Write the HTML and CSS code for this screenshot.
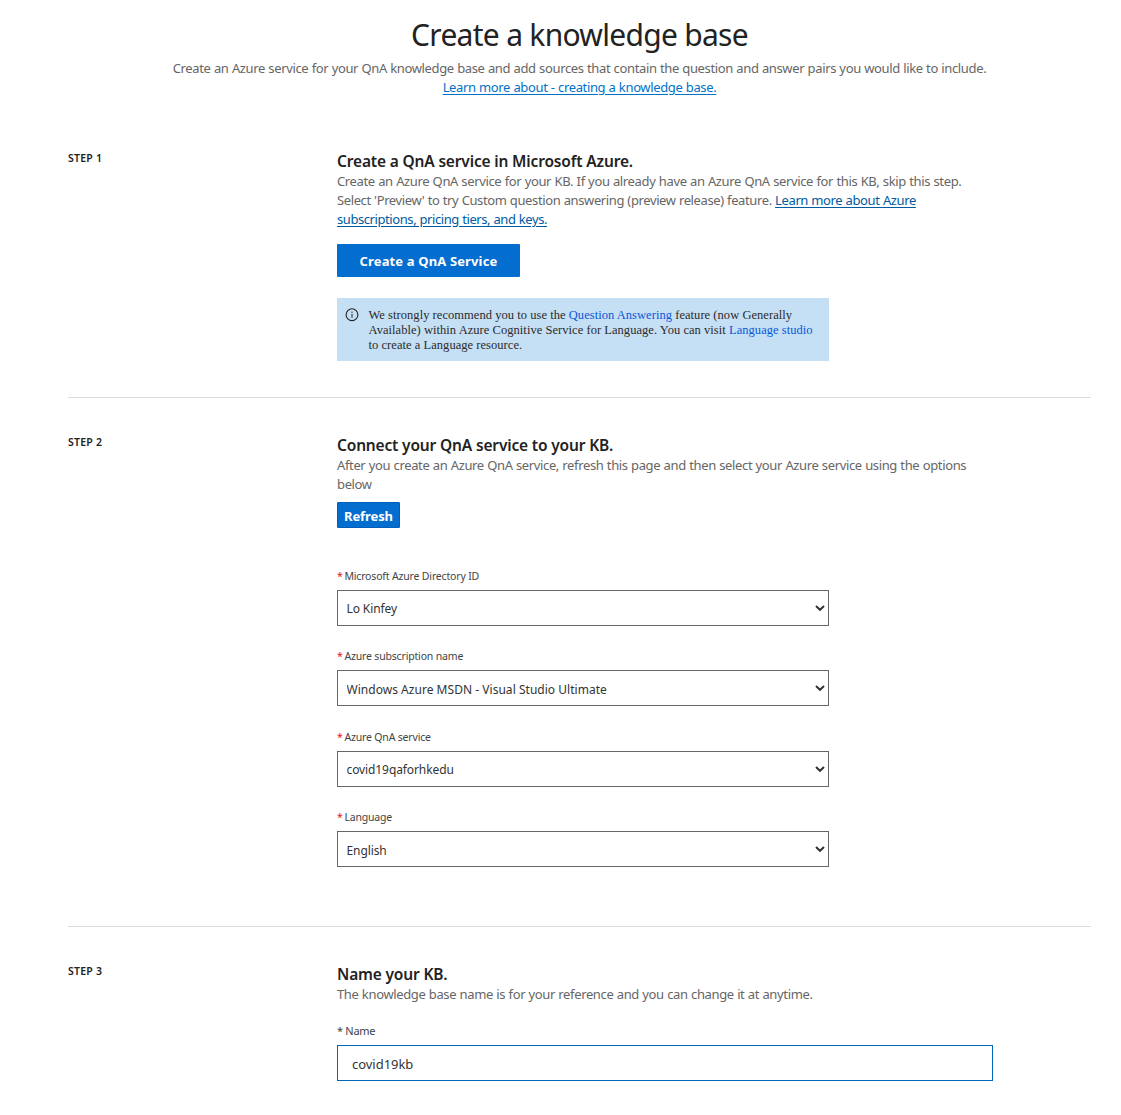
FILE: index.html
```
<!DOCTYPE html>
<html lang="en">
<head>
<meta charset="utf-8">
<title>Create a knowledge base</title>
<link rel="stylesheet" href="styles.css">
</head>
<body>
<header class="page-header">
  <h1>Create a knowledge base</h1>
  <p>Create an Azure service for your QnA knowledge base and add sources that contain the question and answer pairs you would like to include.<br>
  <a class="header-link" href="#">Learn more about - creating a knowledge base.</a></p>
</header>
<main>
  <section class="step step-one">
    <div class="step-label">STEP 1</div>
    <div class="step-body">
      <h2>Create a QnA service in Microsoft Azure.</h2>
      <p>Create an Azure QnA service for your KB. If you already have an Azure QnA service for this KB, skip this step.<br><span class="snug">Select 'Preview' to try Custom question answering (preview release) feature. <a href="#">Learn more about Azure</a></span><br><a class="tight" href="#">subscriptions, pricing tiers, and keys.</a></p>
      <button class="create" type="button">Create a QnA Service</button>
      <div class="notice">
        <svg width="14" height="14" viewBox="0 0 14 14" fill="none" stroke="#222"><circle cx="7" cy="6.7" r="5.9" stroke-width="1.1"/><path d="M7 5.8v4M7 3.6v1.2" stroke-width="1"/></svg>
        <div>We strongly recommend you to use the <a href="#">Question Answering</a> feature (now Generally<br>Available) within Azure Cognitive Service for Language. You can visit <a href="#">Language studio</a><br>to create a Language resource.</div>
      </div>
    </div>
  </section>
  <section class="step step-two">
    <div class="step-label">STEP 2</div>
    <div class="step-body">
      <h2>Connect your QnA service to your KB.</h2>
      <p>After you create an Azure QnA service, refresh this page and then select your Azure service using the options<br>below</p>
      <button class="refresh" type="button">Refresh</button>
      <div class="fields">
        <div class="field">
          <label for="directory"><i>*</i> Microsoft Azure Directory ID</label>
          <div class="select"><select id="directory"><option>Lo Kinfey</option></select><svg width="10" height="8" viewBox="0 0 10 8"><path d="M1 2 5 5.8 9 2"/></svg></div>
        </div>
        <div class="field">
          <label for="subscription"><i>*</i> Azure subscription name</label>
          <div class="select wide low"><select id="subscription"><option>Windows Azure MSDN - Visual Studio Ultimate</option></select><svg width="10" height="8" viewBox="0 0 10 8"><path d="M1 2 5 5.8 9 2"/></svg></div>
        </div>
        <div class="field">
          <label for="service"><i>*</i> Azure QnA service</label>
          <div class="select"><select id="service"><option>covid19qaforhkedu</option></select><svg width="10" height="8" viewBox="0 0 10 8"><path d="M1 2 5 5.8 9 2"/></svg></div>
        </div>
        <div class="field">
          <label for="language"><i>*</i> Language</label>
          <div class="select low"><select id="language"><option>English</option></select><svg width="10" height="8" viewBox="0 0 10 8"><path d="M1 2 5 5.8 9 2"/></svg></div>
        </div>
      </div>
    </div>
  </section>
  <section class="step">
    <div class="step-label">STEP 3</div>
    <div class="step-body">
      <h2>Name your KB.</h2>
      <p>The knowledge base name is for your reference and you can change it at anytime.</p>
      <label class="name-label" for="name">* Name</label>
      <input id="name" type="text" value="covid19kb">
    </div>
  </section>
</main>
</body>
</html>
```
FILE: styles.css
```
* { box-sizing: border-box; }
body {
  margin: 0;
  height: 1115px;
  overflow: hidden;
  background: #fff;
  color: #222;
  font-family: "Noto Sans", "Segoe UI", sans-serif;
}
h1, h2, p { margin: 0; }
p {
  font-size: 13px;
  line-height: 19px;
  letter-spacing: -0.36px;
  word-spacing: 0.34px;
  color: #666;
  white-space: nowrap;
}
p a { color: #005ba1; text-decoration: underline; text-underline-offset: 2px; }
.page-header {
  padding: 15px 0 0 38px;
  height: 121px;
  text-align: center;
}
.page-header h1 {
  font-size: 30px;
  line-height: 40px;
  font-weight: 400;
  letter-spacing: -0.71px;
  margin-bottom: 4px;
}
.page-header .header-link { color: #0072c9; }
main { padding: 0 30px 0 68px; }
.step {
  display: grid;
  grid-template-columns: 269px 1fr;
  padding-top: 37px;
}
.step-one { padding-top: 30px; height: 277px; border-bottom: 1px solid #dcdcdc; }
.step-two { height: 529px; border-bottom: 1px solid #dcdcdc; }
.step-label {
  font-size: 10.5px;
  line-height: 14px;
  font-weight: 600;
  letter-spacing: 0.25px;
}
h2 {
  font-size: 15.5px;
  line-height: 20px;
  font-weight: 600;
  letter-spacing: -0.16px;
  margin-bottom: 1px;
}
.snug { letter-spacing: -0.385px; }
.tight { letter-spacing: -0.42px; }
button {
  display: block;
  font-family: inherit;
  font-size: 13px;
  font-weight: 700;
  color: #fff;
  background: #046dd0;
  border: 0;
  border-radius: 1px;
  padding: 0;
}
.create { width: 183px; height: 33px; margin-top: 15px; letter-spacing: 0.14px; }
.refresh {
  width: 63px;
  height: 26px;
  margin-top: 8px;
  padding-top: 1px;
  border: 1px solid #0060b9;
  letter-spacing: -0.09px;
}
.notice {
  display: flex;
  gap: 9.5px;
  width: 492px;
  height: 63px;
  margin-top: 21px;
  padding: 10px 0 0 8px;
  background: #c5dff4;
  color: #2b2b2b;
  font: 12.5px/15px "Liberation Serif", "Times New Roman", serif;
  letter-spacing: 0.045px;
  white-space: nowrap;
}
.notice a { color: #0b57d8; text-decoration: none; }
.fields {
  display: flex;
  flex-direction: column;
  gap: 30.3px;
  width: 492px;
  margin-top: 41px;
}
.field { height: 50px; }
.field label {
  display: block;
  height: 14px;
  margin-bottom: 7px;
  font-size: 10.5px;
  line-height: 14px;
  letter-spacing: -0.17px;
  color: #444;
}
.field i { font-style: normal; color: #e81123; margin-right: -0.8px; }
.select { display: grid; align-items: center; }
.select > * { grid-area: 1 / 1; }
.select select {
  appearance: none;
  width: 100%;
  height: 36px;
  padding: 1px 20px 0 8.5px;
  border: 1px solid #666;
  border-radius: 0;
  background: #fff;
  color: #333;
  font: 12px "Noto Sans", sans-serif;
  letter-spacing: -0.1px;
}
.select.wide select { letter-spacing: 0.03px; }
.select.low select { padding-top: 3px; }
.select svg {
  justify-self: end;
  margin-right: 4px;
  pointer-events: none;
  fill: none;
  stroke: #333;
  stroke-width: 2;
}
.name-label {
  display: block;
  margin: 19px 0 7px;
  font-size: 11px;
  line-height: 15px;
  letter-spacing: -0.3px;
  color: #444;
}
input {
  display: block;
  width: 656px;
  height: 36px;
  padding: 2px 15px 0 14px;
  border: 1px solid #0067b8;
  border-radius: 0;
  color: #333;
  font: 13px "Noto Sans", sans-serif;
  letter-spacing: -0.03px;
}
```
